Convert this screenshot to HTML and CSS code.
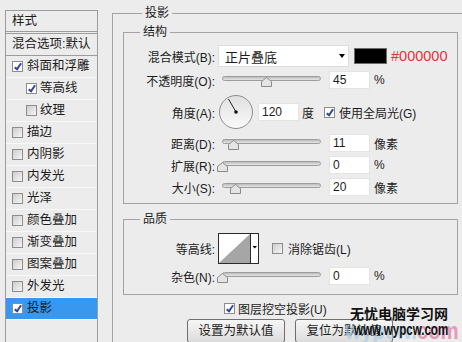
FILE: index.html
```html
<!DOCTYPE html>
<html lang="zh-CN">
<head>
    <meta charset="UTF-8">
    <title>图层样式 - 投影</title>
    <link rel="stylesheet" href="styles.css">
</head>
<body>
    <div class="dialog">
        <div class="sidebar">
            <div class="side-head">样式</div>
            <div class="side-blend">混合选项:默认</div>
            <div class="side-row"><span class="cb on"></span><span class="side-text">斜面和浮雕</span></div>
            <div class="side-row sub-item"><span class="cb on"></span><span class="side-text">等高线</span></div>
            <div class="side-row sub-item"><span class="cb"></span><span class="side-text">纹理</span></div>
            <div class="side-row"><span class="cb"></span><span class="side-text">描边</span></div>
            <div class="side-row"><span class="cb"></span><span class="side-text">内阴影</span></div>
            <div class="side-row"><span class="cb"></span><span class="side-text">内发光</span></div>
            <div class="side-row"><span class="cb"></span><span class="side-text">光泽</span></div>
            <div class="side-row"><span class="cb"></span><span class="side-text">颜色叠加</span></div>
            <div class="side-row"><span class="cb"></span><span class="side-text">渐变叠加</span></div>
            <div class="side-row"><span class="cb"></span><span class="side-text">图案叠加</span></div>
            <div class="side-row"><span class="cb"></span><span class="side-text">外发光</span></div>
            <div class="side-row selected"><span class="cb on"></span><span class="side-text">投影</span></div>
        </div>

        <div class="main">
            <div class="group">
                <div class="legend">投影</div>

                <div class="box box-struct">
                    <div class="legend">结构</div>

                    <div class="row row-mode">
                        <span class="label">混合模式(B):</span>
                        <div class="select">正片叠底<span class="arrow"></span></div>
                        <span class="swatch"></span>
                        <span class="hex">#000000</span>
                    </div>

                    <div class="row row-slider row-opacity">
                        <span class="label">不透明度(O):</span>
                        <div class="slider">
                            <div class="track"></div>
                            <span class="thumb" style="left: 39px"><svg width="11" height="10" viewBox="0 0 11 10"><polygon points="5.5,0.5 10.5,4.5 10.5,9.5 0.5,9.5 0.5,4.5" fill="#e4e4e4" stroke="#8a8a8a"/></svg></span>
                        </div>
                        <span class="num">45</span>
                        <span class="unit">%</span>
                    </div>

                    <div class="row row-angle">
                        <span class="label">角度(A):</span>
                        <svg class="dial" width="34" height="34" viewBox="0 0 34 34">
                            <defs>
                                <linearGradient id="dialFill" x1="0" y1="0" x2="0" y2="1">
                                    <stop offset="0" stop-color="#e0e0e0"/>
                                    <stop offset="1" stop-color="#fafafa"/>
                                </linearGradient>
                            </defs>
                            <circle cx="17" cy="17" r="16.5" fill="url(#dialFill)" stroke="#8c8c8c"/>
                            <line x1="17" y1="17" x2="9.5" y2="4" stroke="#222"/>
                            <circle cx="17" cy="17" r="1.8" fill="#111"/>
                        </svg>
                        <span class="num num-angle">120</span>
                        <span class="deg">度</span>
                        <span class="cb on cb-global"></span>
                        <span class="cb-label">使用全局光(G)</span>
                    </div>

                    <div class="row row-slider row-dist">
                        <span class="label">距离(D):</span>
                        <div class="slider">
                            <div class="track"></div>
                            <span class="thumb" style="left: 6px"><svg width="11" height="10" viewBox="0 0 11 10"><polygon points="5.5,0.5 10.5,4.5 10.5,9.5 0.5,9.5 0.5,4.5" fill="#e4e4e4" stroke="#8a8a8a"/></svg></span>
                        </div>
                        <span class="num">11</span>
                        <span class="unit">像素</span>
                    </div>

                    <div class="row row-slider row-next">
                        <span class="label">扩展(R):</span>
                        <div class="slider">
                            <div class="track"></div>
                            <span class="thumb" style="left: -5px"><svg width="11" height="10" viewBox="0 0 11 10"><polygon points="5.5,0.5 10.5,4.5 10.5,9.5 0.5,9.5 0.5,4.5" fill="#e4e4e4" stroke="#8a8a8a"/></svg></span>
                        </div>
                        <span class="num">0</span>
                        <span class="unit">%</span>
                    </div>

                    <div class="row row-slider row-next">
                        <span class="label">大小(S):</span>
                        <div class="slider">
                            <div class="track"></div>
                            <span class="thumb" style="left: 8px"><svg width="11" height="10" viewBox="0 0 11 10"><polygon points="5.5,0.5 10.5,4.5 10.5,9.5 0.5,9.5 0.5,4.5" fill="#e4e4e4" stroke="#8a8a8a"/></svg></span>
                        </div>
                        <span class="num">20</span>
                        <span class="unit">像素</span>
                    </div>
                </div>

                <div class="box box-quality">
                    <div class="legend">品质</div>

                    <div class="row row-contour">
                        <span class="label">等高线:</span>
                        <svg class="contour" width="41" height="31" viewBox="0 0 41 31">
                            <rect x="0.5" y="0.5" width="40" height="30" fill="#fff" stroke="#2b2b2b"/>
                            <polygon points="1,30 32,1 32,30" fill="#a6a6a6"/>
                            <line x1="32.5" y1="0" x2="32.5" y2="31" stroke="#2b2b2b"/>
                            <polygon points="34.5,13 39,13 36.75,15.5" fill="#000"/>
                        </svg>
                        <span class="cb cb-aa"></span>
                        <span class="cb-label">消除锯齿(L)</span>
                    </div>

                    <div class="row row-slider row-noise">
                        <span class="label">杂色(N):</span>
                        <div class="slider">
                            <div class="track"></div>
                            <span class="thumb" style="left: -5px"><svg width="11" height="10" viewBox="0 0 11 10"><polygon points="5.5,0.5 10.5,4.5 10.5,9.5 0.5,9.5 0.5,4.5" fill="#e4e4e4" stroke="#8a8a8a"/></svg></span>
                        </div>
                        <span class="num">0</span>
                        <span class="unit">%</span>
                    </div>
                </div>

                <div class="knockout">
                    <span class="cb on"></span>
                    <span class="cb-label">图层挖空投影(U)</span>
                </div>

                <div class="buttons">
                    <div class="btn">设置为默认值</div>
                    <div class="btn">复位为默认值</div>
                </div>
            </div>
        </div>
    </div>

    <!-- watermark over the corner -->
    <div class="watermark">
        <div class="wm-back"><span class="wm-blue">wypcw.</span><span class="wm-pink">com</span></div>
        <div class="wm-title">无忧电脑学习网</div>
        <div class="wm-url">www.wypcw.com</div>
    </div>
</body>
</html>
```

FILE: styles.css
```css
html, body {
    margin: 0;
    padding: 0;
}

body {
    position: relative;
    width: 462px;
    height: 342px;
    overflow: hidden;
    background-color: #ececec;
    font-family: "Liberation Sans", "Noto Sans CJK SC", sans-serif;
    font-size: 12px;
    color: #1c1c1c;
}

.dialog {
    display: flex;
    align-items: flex-start;
    padding: 10px 0 0 5px;
}

/* left list of styles */
.sidebar {
    flex: none;
    width: 91px;
    height: 340px;
    border: 1px solid #9c9c9c;
}

.side-head {
    height: 20px;
    line-height: 20px;
    padding-left: 6px;
    border-bottom: 1px solid #9c9c9c;
    font-size: 12.5px;
}

.side-blend {
    margin-top: 1px;
    height: 21px;
    line-height: 21px;
    padding-left: 6px;
    border-top: 1px solid #9c9c9c;
    border-bottom: 1px solid #9c9c9c;
    font-size: 12.5px;
}

.side-row {
    display: flex;
    align-items: center;
    height: 21px;
    padding-left: 6px;
    border-bottom: 1px solid #f8f8f8;
}

.side-row.sub-item {
    padding-left: 20px;
}

.side-row.selected {
    background-color: #3898f0;
}

.side-text {
    margin-left: 4px;
    font-size: 12.5px;
    line-height: 21px;
}

.sub-item .side-text {
    margin-left: 3px;
}

/* checkboxes */
.cb {
    position: relative;
    flex: none;
    width: 11px;
    height: 11px;
    box-sizing: border-box;
    border: 1px solid #8d8d8d;
    background: linear-gradient(135deg, #cdcdcd, #f6f6f6);
}

.cb.on {
    background: #fff;
}

.cb.on::after {
    content: '';
    position: absolute;
    left: 3px;
    top: 0;
    width: 2px;
    height: 6px;
    border: solid #34489e;
    border-width: 0 2px 2px 0;
    transform: rotate(35deg);
}

.cb-label {
    margin-left: 4px;
    white-space: nowrap;
}

/* right side */
.main {
    margin-left: 14px;
}

.group {
    margin-top: 3px;
    width: 345px;
    padding-left: 10px;
    border: 1px solid #a3a3a3;
}

.legend {
    width: fit-content;
    margin: -9px 0 0 19px;
    padding: 0 3px;
    line-height: 16px;
    background-color: #ececec;
}

.box {
    width: 333px;
    border: 1px solid #a3a3a3;
}

.box .legend {
    margin-left: 16px;
}

.box-struct {
    margin-top: 11px;
    padding-bottom: 7px;
}

.box-quality {
    margin-top: 15px;
    padding-bottom: 9px;
}

.row {
    display: flex;
    align-items: center;
}

.label {
    flex: none;
    width: 91px;
    text-align: right;
    white-space: nowrap;
}

.row-mode {
    margin-top: 5px;
    height: 22px;
}

.row-slider {
    height: 18px;
}

.row-opacity {
    margin-top: 4px;
}

.row-angle {
    margin-top: 6px;
    height: 34px;
}

.row-dist {
    margin-top: 5px;
}

.row-next {
    margin-top: 4px;
}

.row-contour {
    margin-top: 6px;
    height: 31px;
}

.row-noise {
    margin-top: 3px;
}

.select {
    display: flex;
    align-items: center;
    flex: none;
    width: 131px;
    height: 22px;
    box-sizing: border-box;
    margin-left: 3px;
    padding-left: 6px;
    background-color: #fff;
    border: 1px solid #dcdcdc;
    font-size: 13px;
}

.arrow {
    margin-left: auto;
    margin-right: 3px;
    width: 0;
    height: 0;
    border-left: 3.5px solid transparent;
    border-right: 3.5px solid transparent;
    border-top: 4px solid #000;
}

.swatch {
    flex: none;
    width: 33px;
    height: 16px;
    box-sizing: border-box;
    margin-left: 5px;
    background-color: #000;
    border: 1px solid #6b6b6b;
}

.hex {
    margin-left: 4px;
    font-size: 14.5px;
    color: #e5323e;
}

.slider {
    position: relative;
    flex: none;
    width: 99px;
    height: 12px;
    margin-left: 7px;
}

.track {
    margin-top: 2px;
    height: 5px;
    box-sizing: border-box;
    border: 1px solid #9d9d9d;
    border-radius: 3px;
    background: linear-gradient(#bcbcbc, #e6e6e6);
}

.thumb {
    position: absolute;
    top: 3px;
    width: 11px;
    height: 10px;
    line-height: 0;
}

.num {
    flex: none;
    width: 41px;
    height: 18px;
    box-sizing: border-box;
    margin-left: 8px;
    padding-left: 3px;
    line-height: 16px;
    background-color: #fff;
    border: 1px solid #e4e4e4;
}

.unit {
    margin-left: 4px;
}

.dial {
    flex: none;
    margin-left: 4px;
}

.num-angle {
    margin-left: 5px;
}

.deg {
    margin-left: 3px;
}

.cb-global {
    margin-left: 10px;
}

.contour {
    flex: none;
    margin-left: 3px;
}

.cb-aa {
    margin-left: 13px;
}

.cb-aa + .cb-label {
    margin-left: 5px;
}

.knockout {
    display: flex;
    align-items: center;
    height: 12px;
    margin: 7px 0 0 101px;
}

.knockout .cb-label {
    margin-left: 3px;
}

.buttons {
    display: flex;
    gap: 10px;
    margin: 5px 0 0 64px;
}

.btn {
    width: 98px;
    height: 24px;
    box-sizing: border-box;
    border: 1px solid #6f6f6f;
    border-radius: 3px;
    background: linear-gradient(#f6f6f6, #dcdcdc);
    text-align: center;
    line-height: 22px;
    font-size: 12.5px;
}

/* watermark */
.watermark {
    position: absolute;
    left: 350px;
    top: 305px;
    width: 112px;
    height: 37px;
}

.wm-back {
    position: absolute;
    left: -5px;
    top: 12px;
    font-family: "Liberation Sans", sans-serif;
    font-weight: bold;
    font-size: 24px;
    line-height: 28px;
    white-space: nowrap;
    transform: scaleX(0.85);
    transform-origin: left top;
    opacity: 0.7;
}

.wm-blue {
    color: #a9cfe9;
}

.wm-pink {
    color: #e07aa6;
}

.wm-title {
    position: relative;
    font-family: "Noto Sans CJK SC", sans-serif;
    font-weight: bold;
    font-size: 14px;
    line-height: 17px;
    color: #111;
    white-space: nowrap;
}

.wm-url {
    position: relative;
    font-family: "Liberation Sans", sans-serif;
    font-weight: bold;
    font-size: 17px;
    line-height: 16px;
    color: #111;
    white-space: nowrap;
    transform: scaleX(0.68);
    transform-origin: left top;
    margin-left: 4px;
}
```
